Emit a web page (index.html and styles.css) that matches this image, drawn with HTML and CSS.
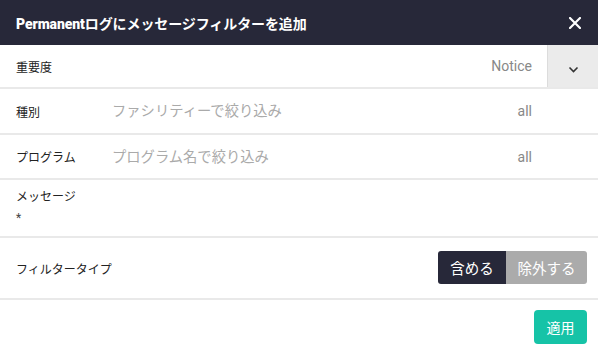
FILE: index.html
```html
<!DOCTYPE html>
<html lang="ja">
<head>
  <meta charset="UTF-8">
  <title>メッセージフィルターを追加</title>
  <link rel="stylesheet" href="styles.css">
</head>
<body>
  <div class="modal">
    <!-- Header -->
    <div class="modal-header">
      <span class="modal-title"><b>Permanent</b>ログにメッセージフィルターを追加</span>
      <span class="close">
        <svg width="12" height="12" viewBox="0 0 12 12"><path d="M1 1 L11 11 M11 1 L1 11" stroke="#fff" stroke-width="2.2" stroke-linecap="round"/></svg>
      </span>
    </div>

    <!-- Severity -->
    <div class="row row-severity">
      <label class="label">重要度</label>
      <div class="select-value">Notice</div>
      <div class="select-btn">
        <svg width="11" height="7" viewBox="0 0 11 7"><path d="M1.5 1.5 L5.5 5.5 L9.5 1.5" fill="none" stroke="#333" stroke-width="1.6"/></svg>
      </div>
    </div>

    <div class="row row-facility">
      <label class="label">種別</label>
      <input class="field" type="text" placeholder="ファシリティーで絞り込み">
      <span class="value">all</span>
    </div>

    <div class="row">
      <label class="label">プログラム</label>
      <input class="field" type="text" placeholder="プログラム名で絞り込み">
      <span class="value">all</span>
    </div>

    <div class="row row-message">
      <label class="label">メッセージ</label>
      <div class="asterisk">*</div>
    </div>

    <div class="row row-type">
      <label class="label">フィルタータイプ</label>
      <div class="toggle">
        <button class="toggle-btn active">含める</button>
        <button class="toggle-btn">除外する</button>
      </div>
    </div>

    <div class="modal-footer">
      <button class="apply">適用</button>
    </div>
  </div>
</body>
</html>
```

FILE: styles.css
```css
* { box-sizing: border-box; }
body {
  margin: 0;
  font-family: Roboto, "Noto Sans CJK JP", sans-serif;
  background: #fff;
  color: #222;
}

.modal {
  width: 598px;
  height: 354px;
  background: #fff;
}

.modal-header {
  height: 45px;
  background: #272839;
  display: flex;
  align-items: center;
  justify-content: space-between;
  padding: 0 16px;
  color: #fff;
}

.modal-title {
  font-size: 14px;
  font-weight: bold;
  letter-spacing: -0.1px;
}

.close {
  display: flex;
  margin-right: 1px;
}

.row {
  display: flex;
  align-items: center;
  height: 45px;
  border-bottom: 2px solid #e9e9e9;
  padding-left: 16px;
}

.label {
  width: 96px;
  font-size: 12px;
  color: #222;
}

.row-severity {
  height: 44px;
  padding-right: 0;
}

.row-facility {
  height: 46px;
}

.select-value {
  flex: 1;
  text-align: right;
  font-size: 14px;
  color: #888;
  padding-right: 15px;
}

.select-btn {
  width: 51px;
  height: 42px;
  background: #ebebeb;
  border-left: 1px solid #dcdcdc;
  display: flex;
  align-items: center;
  justify-content: center;
  padding-top: 6px;
}

.field {
  flex: 1;
  border: none;
  outline: none;
  font-family: Roboto, "Noto Sans CJK JP", sans-serif;
  font-size: 14.3px;
  padding: 0;
  color: #222;
}

.field::placeholder {
  color: #aaa;
}

.value {
  font-size: 14px;
  color: #888;
  margin-right: 66px;
}

.row-message {
  height: 58px;
  flex-direction: column;
  align-items: flex-start;
  justify-content: flex-start;
  padding-top: 7px;
}

.row-message .label {
  width: auto;
}

.asterisk {
  font-size: 12px;
  margin-top: 7px;
  color: #444;
}

.row-type {
  height: 62px;
  justify-content: space-between;
  padding-right: 11px;
}

.toggle {
  display: flex;
  border-radius: 3px;
  overflow: hidden;
  margin-top: -2px;
}

.toggle-btn {
  border: none;
  height: 33px;
  font-family: Roboto, "Noto Sans CJK JP", sans-serif;
  font-size: 14.5px;
  color: #fff;
  background: #ababab;
  padding: 0;
  width: 81px;
}

.toggle-btn.active {
  background: #272839;
  width: 68px;
}

.modal-footer {
  display: flex;
  justify-content: flex-end;
  padding: 10px 11px 0 0;
}

.apply {
  width: 53px;
  height: 34px;
  border: none;
  border-radius: 4px;
  background: #16c3a7;
  color: #fff;
  font-family: Roboto, "Noto Sans CJK JP", sans-serif;
  font-size: 14px;
}
```
